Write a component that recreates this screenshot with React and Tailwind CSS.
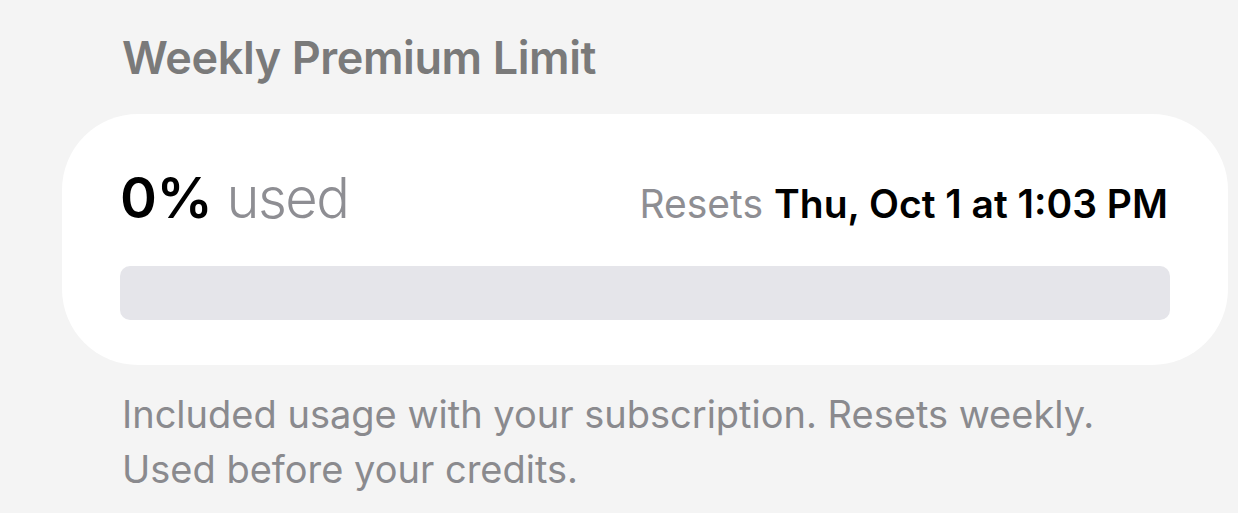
import React from 'react';

const font = { fontFamily: 'Inter, "Noto Sans", sans-serif' };

const App = () => {
  return (
    <div className="w-[1238px] h-[513px] overflow-hidden bg-[#f4f4f4]" style={font}>
      {/* Section title */}
      <h2 className="pl-[122px] pt-[30px] text-[45px] leading-[56px] font-semibold text-[#7a7a7a] tracking-[-0.4px]">
        Weekly Premium Limit
      </h2>

      {/* Usage card */}
      <div className="ml-[62px] mt-[28px] w-[1166px] h-[251px] rounded-[76px] bg-white px-[58px] pt-[52px]">
        <div className="flex items-baseline justify-between">
          <p className="text-[56px] leading-[64px]">
            <span className="font-semibold text-black tracking-[-0.5px]">0%</span>
            <span className="text-[#8e8e93] font-light tracking-[-1.5px]"> used</span>
          </p>
          <p className="text-[39px] leading-[48px] pr-[2px]">
            <span className="text-[#8e8e93]">Resets </span>
            <span className="font-semibold text-black">Thu, Oct 1 at 1:03 PM</span>
          </p>
        </div>
        <div className="mt-[36px] h-[54px] w-full rounded-[10px] bg-[#e5e5ea]" />
      </div>

      {/* Footnote */}
      <p className="pl-[122px] pt-[22px] w-[1150px] text-[38px] leading-[55px] text-[#8a8a8e]">
        Included usage with your subscription. Resets weekly.
        <br />
        Used before your credits.
      </p>
    </div>
  );
};

export default App;
